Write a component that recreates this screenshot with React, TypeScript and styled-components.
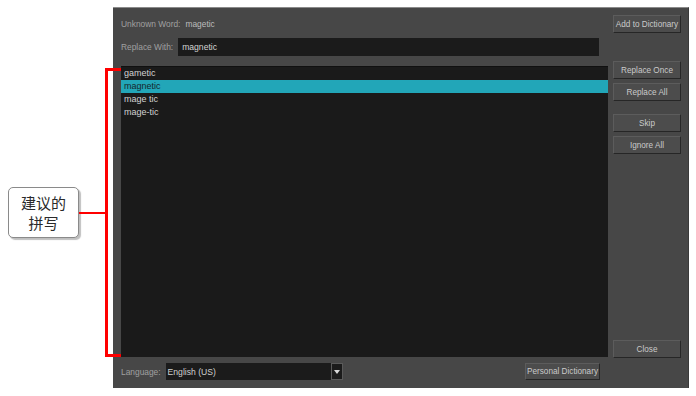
import styled, { createGlobalStyle } from "styled-components";

const GlobalStyle = createGlobalStyle`
  html, body {
    margin: 0;
    padding: 0;
    background: #ffffff;
  }
  body {
    font-family: "Liberation Sans", Arial, sans-serif;
  }
`;

const suggestions = ["gametic", "magnetic", "mage tic", "mage-tic"];

const App = () => {
  return (
    <>
      <GlobalStyle />
      <Page>
        <Annotation>
          <Callout>
            建议的
            <br />
            拼写
          </Callout>
          <Connector />
          <Bracket />
        </Annotation>
        <Dialog>
          <MainCell>
            <Label>Unknown Word:</Label>
            <Value>magetic</Value>
          </MainCell>
          <SideCell>
            <Button>Add to Dictionary</Button>
          </SideCell>

          <MainCell $padRight={9}>
            <Label>Replace With:</Label>
            <TextInput>magnetic</TextInput>
          </MainCell>
          <SideCell />

          <ListCell>
            <List>
              {suggestions.map((word) => (
                <ListItem key={word} $selected={word === "magnetic"}>
                  {word}
                </ListItem>
              ))}
            </List>
          </ListCell>
          <ButtonColumn>
            <Button>Replace Once</Button>
            <Button>Replace All</Button>
            <Button $gapTop={13}>Skip</Button>
            <Button>Ignore All</Button>
            <Spacer />
            <Button>Close</Button>
          </ButtonColumn>

          <MainCell $padRight={8}>
            <Label>Language:</Label>
            <Select>
              <span>English (US)</span>
              <SelectArrow>
                <svg width="6" height="4" viewBox="0 0 6 4">
                  <path d="M0 0H6L3 4Z" fill="#d8d8d8" />
                </svg>
              </SelectArrow>
            </Select>
            <Spacer />
            <Button $width={75} $height={17}>
              Personal Dictionary
            </Button>
          </MainCell>
          <SideCell />
        </Dialog>
      </Page>
    </>
  );
};

export default App;

const Page = styled.div`
  display: flex;
  align-items: flex-start;
  padding-top: 7px;
  width: 696px;
  height: 396px;
  box-sizing: border-box;
`;

const Annotation = styled.div`
  position: relative;
  z-index: 1;
  display: flex;
  align-items: center;
  width: 121px;
  height: 289px;
  margin-top: 61px;
  margin-right: -8px;
  flex-shrink: 0;
`;

const Callout = styled.div`
  box-sizing: border-box;
  width: 71px;
  height: 51px;
  margin-left: 8px;
  border: 1px solid #8a8a8a;
  border-radius: 5px;
  background: #ffffff;
  box-shadow: 2px 2px 1px rgba(0, 0, 0, 0.25);
  display: flex;
  align-items: center;
  justify-content: center;
  text-align: center;
  font-family: "Noto Sans CJK SC", "Liberation Sans", sans-serif;
  font-size: 15px;
  line-height: 20px;
  color: #2a2a2a;
`;

const Connector = styled.div`
  width: 26px;
  height: 2px;
  background: #ff0000;
`;

const Bracket = styled.div`
  box-sizing: border-box;
  width: 16px;
  height: 289px;
  border: 3px solid #ff0000;
  border-right: none;
`;

const Dialog = styled.div`
  box-sizing: border-box;
  width: 576px;
  height: 381px;
  flex-shrink: 0;
  background: #474747;
  border-top: 1px solid #8a8a8a;
  border-right: 1px solid #3a3a3a;
  padding: 7px 6px 8px 8px;
  display: grid;
  grid-template-columns: 487px 68px;
  grid-template-rows: 18px 18px 297px 17px;
  column-gap: 5px;
  row-gap: 5px;
`;

const MainCell = styled.div<{ $padRight?: number }>`
  display: flex;
  align-items: center;
  gap: 5px;
  padding-right: ${(p) => p.$padRight ?? 0}px;
  min-width: 0;
`;

const SideCell = styled.div`
  display: flex;
  flex-direction: column;
`;

const Label = styled.span`
  font-size: 8.4px;
  color: #a0a0a0;
  white-space: nowrap;
`;

const Value = styled.span`
  font-size: 8.4px;
  color: #bcbcbc;
`;

const TextInput = styled.div`
  flex: 1;
  height: 18px;
  background: #1b1b1b;
  color: #d4d4d4;
  font-size: 8.6px;
  line-height: 18px;
  padding-left: 4px;
`;

const ListCell = styled.div`
  padding: 5px 0 1px 0;
  display: flex;
`;

const List = styled.div`
  flex: 1;
  background: #1a1a1a;
  border-top: 1px solid #101010;
  display: flex;
  flex-direction: column;
`;

const ListItem = styled.div<{ $selected?: boolean }>`
  height: 13px;
  line-height: 13px;
  padding-left: 3px;
  font-size: 9px;
  color: ${(p) => (p.$selected ? "#15262b" : "#d2d2d2")};
  background: ${(p) => (p.$selected ? "#22a6b8" : "transparent")};
`;

const ButtonColumn = styled.div`
  display: flex;
  flex-direction: column;
  gap: 4px;
`;

const Button = styled.div<{ $width?: number; $height?: number; $gapTop?: number }>`
  box-sizing: border-box;
  width: ${(p) => p.$width ?? 68}px;
  height: ${(p) => p.$height ?? 18}px;
  margin-top: ${(p) => (p.$gapTop ? p.$gapTop - 4 : 0)}px;
  flex-shrink: 0;
  background: #4c4c4c;
  border: 1px solid #5c5c5c;
  border-right-color: #262626;
  border-bottom-color: #262626;
  color: #cacaca;
  font-size: 8.2px;
  display: flex;
  align-items: center;
  justify-content: center;
  white-space: nowrap;
`;

const Spacer = styled.div`
  flex: 1;
`;

const Select = styled.div`
  box-sizing: border-box;
  width: 177px;
  height: 17px;
  background: #1b1b1b;
  display: flex;
  align-items: center;
  justify-content: space-between;
  color: #d0d0d0;
  font-size: 8.6px;
  padding-left: 2px;
  span {
    white-space: nowrap;
  }
`;

const SelectArrow = styled.div`
  box-sizing: border-box;
  width: 12px;
  height: 17px;
  border: 1px solid #5a5a5a;
  display: flex;
  align-items: center;
  justify-content: center;
`;
